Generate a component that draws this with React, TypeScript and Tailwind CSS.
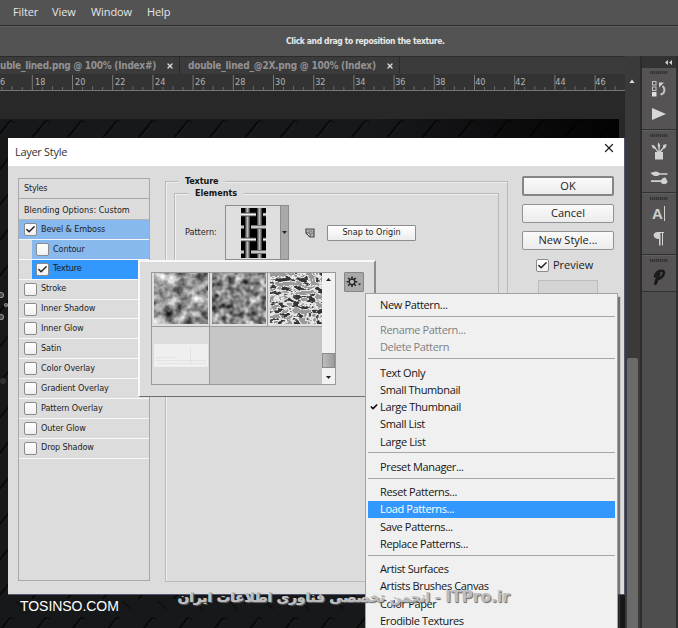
import React from "react";
import { Check, X } from "lucide-react";

interface StyleRow {
  label: string;
  checked?: boolean;
  nested?: boolean;
  tone?: "light" | "strong";
}

interface MenuEntry {
  label: string;
  disabled?: boolean;
  checked?: boolean;
  active?: boolean;
}

const STYLE_ROWS: StyleRow[] = [
  { label: "Bevel & Emboss", checked: true, tone: "light" },
  { label: "Contour", nested: true, tone: "light" },
  { label: "Texture", nested: true, checked: true, tone: "strong" },
  { label: "Stroke" },
  { label: "Inner Shadow" },
  { label: "Inner Glow" },
  { label: "Satin" },
  { label: "Color Overlay" },
  { label: "Gradient Overlay" },
  { label: "Pattern Overlay" },
  { label: "Outer Glow" },
  { label: "Drop Shadow" },
];

const MENU_GROUPS: MenuEntry[][] = [
  [{ label: "New Pattern..." }],
  [
    { label: "Rename Pattern...", disabled: true },
    { label: "Delete Pattern", disabled: true },
  ],
  [
    { label: "Text Only" },
    { label: "Small Thumbnail" },
    { label: "Large Thumbnail", checked: true },
    { label: "Small List" },
    { label: "Large List" },
  ],
  [{ label: "Preset Manager..." }],
  [
    { label: "Reset Patterns..." },
    { label: "Load Patterns...", active: true },
    { label: "Save Patterns..." },
    { label: "Replace Patterns..." },
  ],
  [
    { label: "Artist Surfaces" },
    { label: "Artists Brushes Canvas" },
    { label: "Color Paper" },
    { label: "Erodible Textures" },
  ],
];

const ROW_TONE = {
  light: "bg-[#87b9ef]",
  strong: "bg-[#3298fe]",
};

function MenuBar() {
  return (
    <div className="flex h-[26px] shrink-0 items-center border-b border-[#2f2f2f] bg-[#535353] pl-[13px] font-['Open_Sans','Noto_Sans',sans-serif] text-[11px] tracking-[-0.1px] text-[#e6e6e6]">
      <span className="w-[39px]">Filter</span>
      <span className="w-[39px]">View</span>
      <span className="w-[56px]">Window</span>
      <span>Help</span>
    </div>
  );
}

function OptionsBar() {
  return (
    <div className="flex h-[30px] shrink-0 items-center border-t border-[#5e5e5e] bg-[#535353] pl-[286px] font-['DejaVu_Sans_Condensed','DejaVu_Sans',sans-serif] text-[8.5px] font-bold tracking-[-0.38px] whitespace-nowrap text-[#e8e8e8]">
      Click and drag to reposition the texture.
    </div>
  );
}

function TabBar() {
  return (
    <div className="flex h-[18px] shrink-0 items-center border-t border-[#2b2b2b] bg-[#3b3b3c] font-['DejaVu_Sans_Condensed','DejaVu_Sans',sans-serif] text-[10px] font-bold whitespace-nowrap text-[#929292]">
      <div className="flex h-full w-[180px] items-center border-r border-[#2b2b2b]">
        <span className="w-[166px] tracking-[-0.28px]">uble_lined.png @ 100% (Index#)</span>
        <X size={8} strokeWidth={4} color="#d6d6d6" />
      </div>
      <div className="flex h-full w-[220px] items-center border-r border-[#2b2b2b] pl-2">
        <span className="w-[198px] tracking-[-0.24px]">double_lined_@2X.png @ 100% (Index)</span>
        <X size={8} strokeWidth={4} color="#d6d6d6" />
      </div>
    </div>
  );
}

function Ruler() {
  const ticks: React.ReactNode[] = [];
  for (let i = -3; i < 64; i++) {
    const x = 32.3 + i * 10.05;
    if (x < 0 || x > 623) continue;
    const major = i % 4 === 0;
    ticks.push(
      <line key={i} x1={x} x2={x} y1={major ? 1 : i % 2 === 0 ? 12 : 13} y2={16} stroke={major ? "#7a7a7a" : "#6a6a6a"} />
    );
  }
  const labels = ["6", "18", "20", "22", "24", "26", "28", "30", "32", "34", "36", "38", "40", "42", "44", "46"];
  return (
    <svg width="625" height="17" className="block shrink-0 bg-[#333334]">
      {ticks}
      <line x1="0" x2="625" y1="16.5" y2="16.5" stroke="#777" />
      {labels.map((label, i) => (
        <text
          key={label}
          x={i === 0 ? 0 : 35 + (i - 1) * 40.02}
          y="10.5"
          fill="#b5b5b5"
          className="font-['DejaVu_Sans_Condensed','DejaVu_Sans',sans-serif] text-[9px]"
        >
          {label}
        </text>
      ))}
    </svg>
  );
}

function Canvas() {
  return (
    <svg width="625" height="537" className="block bg-[#282829]">
      <defs>
        <pattern id="plate" width="35.5" height="35.5" patternUnits="userSpaceOnUse" patternTransform="translate(28 28)">
          <rect width="35.5" height="35.5" fill="#17181a" />
          <path d="M4 18C10 13 12 8 18 1.500" fill="none" stroke="#060606" strokeWidth="1.700" />
          <path d="M18 1l4 2.500M23 21c4 3 7 4 9 8" fill="none" stroke="#0b0b0b" strokeWidth="1.200" />
          <path d="M5.500 19C11.500 14 13.500 9 19 3" fill="none" stroke="#222325" strokeWidth="0.600" />
        </pattern>
        <linearGradient id="fade">
          <stop offset="0.6" stopColor="#000" stopOpacity="0" />
          <stop offset="1" stopColor="#000" stopOpacity="0.9" />
        </linearGradient>
      </defs>
      <rect y="28" width="619" height="509" fill="url(#plate)" />
      <rect y="28" width="619" height="509" fill="url(#fade)" />
      <rect x="619" y="480" width="6" height="57" fill="#171717" />
      <g fill="#45484a" stroke="#8b8f91" strokeWidth="1.200">
        <circle cx="1" cy="204" r="2.500" />
        <circle cx="6" cy="214" r="1.500" />
        <circle cx="1" cy="226" r="2.500" />
      </g>
      <circle cx="3" cy="290" r="3" fill="#303235" />
    </svg>
  );
}

function PanelGrip() {
  return <div className="mt-[3px] h-[3px] w-[18px] shrink-0 bg-[repeating-linear-gradient(90deg,#343434_0_1px,#484848_1px_2px)]" />;
}

function HistoryIcon() {
  return (
    <svg width="16" height="18" viewBox="0 0 16 18" fill="none" stroke="#c4c4c4">
      <rect x="1.5" y="1.500" width="3.500" height="3.500" />
      <rect x="1.5" y="7" width="3.500" height="3.500" />
      <rect x="1" y="12" width="4.500" height="4.500" fill="#e0e0e0" stroke="none" />
      <path d="M9.500 14.500c4.500-1 5-6 2-8.500" strokeWidth="2" />
      <path d="M8 7.500V2.500h5z" fill="#d2d2d2" stroke="none" />
    </svg>
  );
}

function PlayIcon() {
  return (
    <svg width="16" height="14" viewBox="0 0 16 14">
      <path d="M1 1l14 6-14 6z" fill="#d8d8d8" />
    </svg>
  );
}

function BrushCupIcon() {
  return (
    <svg width="16" height="18" viewBox="0 0 16 18" stroke="#d2d2d2" fill="#d2d2d2">
      <path d="M4 10h8v7.500H4z" stroke="none" />
      <path d="M7 10L3.500 5M8 10V4M9 10l4-5" strokeWidth="1.300" />
      <path d="M0.500 3c3 0 4 1 4 4-2 0-3-1-4-4zM7.500 0.500c2 2 2 4 0.500 5.500-1-1-2-3-0.500-5.500zM12 3l3.500-1c0 3-1 4-3 5z" stroke="none" />
    </svg>
  );
}

function BrushesIcon() {
  return (
    <svg width="18" height="16" viewBox="0 0 18 16" fill="#d2d2d2">
      <path d="M0 2.500C2 3.500 4 1 7 1.700c2 .5 2 1.200 3 1.500h7.500v1.600H9.500C7.500 7 3 6.500 0 2.500z" />
      <path d="M1 10.300h10c2-3 3.500-3.300 5-2.300 .5 1 0 2 1.700 3.500-1 3-5 4-7 .6H1z" />
    </svg>
  );
}

function PilcrowIcon() {
  return (
    <svg width="12" height="15" viewBox="0 0 12 15">
      <path d="M5 1h6v1H10v12.500H9V2H7.500v12.500H6V8C-1 8-1 1 5 1z" fill="#d2d2d2" />
    </svg>
  );
}

function PresetIcon() {
  return (
    <svg width="16" height="18" viewBox="0 0 16 18" fill="none" stroke="#1b1b1b" strokeLinecap="round" strokeLinejoin="round">
      <path d="M4.500 15.500L8 5.500" strokeWidth="3.200" />
      <path d="M4 8.500C5 4 8.500 2 12 3c2.500 2-1 7.500-5 7.800" strokeWidth="2.600" />
    </svg>
  );
}

function SidePanel() {
  return (
    <div className="flex w-[53px] shrink-0 bg-[#3a3a3b]">
      <div className="flex w-[14.500px] flex-col items-center">
        <svg width="13" height="302" className="block">
          <path d="M3.500 27L6 23.500 8.500 27z" fill="#ddd" />
        </svg>
        <div className="w-[11px] grow rounded-t-[2px] bg-[#6a6a6b]" />
      </div>
      <div className="flex w-9 flex-col border-l-2 border-[#2c2c2c]">
        <div className="flex h-3 items-center justify-end bg-[#333] pr-1">
          <svg width="7" height="5">
            <path d="M3 0v5L0 2.500zM7 0v5L4 2.500z" fill="#d0d0d0" />
          </svg>
        </div>
        <div className="flex h-[62px] flex-col items-center border-b border-[#313131] bg-[#555354]">
          <PanelGrip />
          <div className="mt-1.5 h-[27px]"><HistoryIcon /></div>
          <PlayIcon />
        </div>
        <div className="flex h-[63px] flex-col items-center border-t border-b border-[#313131] border-t-[#606060] bg-[#555354]">
          <PanelGrip />
          <div className="mt-[5px] h-7"><BrushCupIcon /></div>
          <BrushesIcon />
        </div>
        <div className="flex h-[62px] flex-col items-center border-t border-b border-[#313131] border-t-[#606060] bg-[#555354]">
          <PanelGrip />
          <div className="mt-[5px] flex h-[26px] items-start gap-px font-['Liberation_Sans',sans-serif] text-[15px] leading-[18px] font-bold text-[#cfcfcf]">
            A<span className="mt-px h-[15px] w-px bg-[#d0d0d0]" />
          </div>
          <PilcrowIcon />
        </div>
        <div className="flex h-[37px] flex-col items-center border-t border-b border-[#313131] border-t-[#606060] bg-[#555354]">
          <PanelGrip />
          <div className="mt-1.5"><PresetIcon /></div>
        </div>
        <div className="grow bg-[#4f4e4f]" />
      </div>
      <div className="grow border-l-2 border-[#2e2e2e] bg-[#4b4b4b]" />
    </div>
  );
}

function CheckBox({ checked }: { checked?: boolean }) {
  return (
    <span className="flex size-[13px] shrink-0 items-center justify-center rounded-[2px] border border-[#8b8b8b] bg-gradient-to-b from-white to-[#f0f0f0]">
      {checked && <Check size={11} strokeWidth={3.2} color="#222" className="shrink-0" />}
    </span>
  );
}

function StylesList() {
  return (
    <div className="flex h-[403px] w-[132px] flex-col border border-[#a9a9ab] font-['DejaVu_Sans_Condensed','DejaVu_Sans',sans-serif] text-[9px] text-[#1c1c1c]">
      <div className="flex h-5 shrink-0 items-center border-b border-[#a9a9ab] pl-[5px] tracking-[-0.2px]">Styles</div>
      <div className="flex h-[21px] shrink-0 items-center border-b border-[#b4b4b6] pt-[3px] pl-[5px]">
        Blending Options: Custom
      </div>
      {STYLE_ROWS.map((row) => (
        <div key={row.label} className="flex h-[19.9px] shrink-0 border-b border-[#f8f8f8]">
          {row.nested && <div className="w-[13px] shrink-0" />}
          <div
            className={`flex grow items-center gap-1 ${row.nested ? "pl-1" : "pl-[5px]"} ${row.tone ? ROW_TONE[row.tone] : ""}`}
          >
            <CheckBox checked={row.checked} />
            <span className="tracking-[-0.1px]">{row.label}</span>
          </div>
        </div>
      ))}
    </div>
  );
}

function WovenPattern() {
  return (
    <svg width="25" height="50" viewBox="0 0 25 50">
      <defs>
        <linearGradient id="strandV">
          <stop stopColor="#333" />
          <stop offset="0.5" stopColor="#bdbdbd" />
          <stop offset="1" stopColor="#333" />
        </linearGradient>
        <linearGradient id="strandH" x2="0" y2="1">
          <stop stopColor="#444" />
          <stop offset="0.5" stopColor="#f2f2f2" />
          <stop offset="1" stopColor="#444" />
        </linearGradient>
      </defs>
      <rect width="25" height="50" fill="#000" />
      <rect x="4" width="5" height="50" fill="url(#strandV)" />
      <rect x="16" width="5" height="50" fill="url(#strandV)" />
      <g fill="url(#strandH)">
        <rect y="4.500" width="15" height="4" />
        <rect x="22" y="4.500" width="3" height="4" />
        <rect x="10" y="17" width="15" height="4" />
        <rect y="17" width="3" height="4" />
        <rect y="29.500" width="15" height="4" />
        <rect x="22" y="29.500" width="3" height="4" />
        <rect x="10" y="42" width="15" height="4" />
        <rect y="42" width="3" height="4" />
      </g>
    </svg>
  );
}

function TextureGroup() {
  return (
    <div className="h-[406px] w-[343px] font-['DejaVu_Sans_Condensed','DejaVu_Sans',sans-serif]">
      <fieldset className="m-0 h-full border border-[#b9b9bb] px-2 shadow-[inset_1px_1px_0_#f0f0f0]">
        <legend className="ml-[4px] h-[10px] bg-[#dcdcdd] px-[7px] text-[9px] leading-[10px] font-bold tracking-[-0.1px] text-[#151515]">Texture</legend>
        <fieldset className="mt-[2px] h-[200px] border border-[#b9b9bb] px-2 shadow-[inset_1px_1px_0_#f0f0f0]">
          <legend className="ml-[5px] h-[10px] bg-[#dcdcdd] px-[7px] text-[9px] leading-[10px] font-bold text-[#151515]">Elements</legend>
          <div className="mt-[7px] flex items-center pl-[2px]">
            <span className="w-[40px] text-[9px] text-[#1c1c1c]">Pattern:</span>
            <div className="flex h-[55px] w-[64px] shrink-0 border border-[#8d8d8d]">
              <div className="flex grow items-center justify-center bg-[#dfdfe0]"><WovenPattern /></div>
              <div className="flex w-2 shrink-0 items-center justify-center border-l border-[#8d8d8d] bg-[#a9a9aa]">
                <svg width="5" height="3"><path d="M0 0h5L2.500 3z" fill="#222" /></svg>
              </div>
            </div>
            <svg width="10" height="10" className="ml-4 shrink-0">
              <path d="M1 1h8v8H5L1 5z" fill="#b9b9b9" stroke="#4a4a4a" strokeWidth="1.200" />
              <path d="M1 5h4v4z" fill="#eee" stroke="#4a4a4a" />
              <path d="M3 3h4v4" fill="none" stroke="#666" strokeWidth="0.800" />
            </svg>
            <div className="ml-[12px] flex h-4 w-[89px] shrink-0 items-center justify-center rounded-[1px] border border-[#8d8d8d] bg-gradient-to-b from-white to-[#ececec] text-[9px] text-[#1c1c1c]">
              Snap to Origin
            </div>
          </div>
        </fieldset>
      </fieldset>
    </div>
  );
}

function DialogButtons() {
  return (
    <div className="flex w-[92px] flex-col font-['Open_Sans','Noto_Sans',sans-serif] text-[11px] text-[#1b1b1b]">
      <div className="flex h-5 items-center justify-center rounded-[2px] border-2 border-[#858585] bg-gradient-to-b from-[#fafafa] to-[#ececec]">OK</div>
      <div className="mt-2 flex h-[19px] items-center justify-center rounded-[2px] border border-[#929292] bg-gradient-to-b from-[#fafafa] to-[#ececec]">Cancel</div>
      <div className="mt-2 flex h-[19px] items-center justify-center rounded-[2px] border border-[#929292] bg-gradient-to-b from-[#fafafa] to-[#ececec]">New Style...</div>
      <div className="mt-[7px] flex h-[17px] items-center gap-1 pl-[14px]">
        <CheckBox checked />
        <span>Preview</span>
      </div>
      <div className="mt-[6px] ml-4 h-[60px] w-[60px] border border-[#bcbcbe] bg-[#d4d4d5]" />
    </div>
  );
}

function LayerStyleDialog() {
  return (
    <div className="absolute top-[138px] left-[8px] h-[457px] w-[617px] border-r border-b border-[#50566c] bg-[#dcdcdd]">
      <div className="flex h-[28px] items-center justify-between bg-white pr-[8px] pl-[7px] font-['Open_Sans','Noto_Sans',sans-serif] text-[11px] tracking-[-0.3px] text-[#333]">
        Layer Style
        <X size={14} strokeWidth={2.200} color="#222" className="mb-[9px]" />
      </div>
      <div className="flex pl-[10px]">
        <div className="pt-3"><StylesList /></div>
        <div className="ml-[15px] pt-[10px]"><TextureGroup /></div>
        <div className="ml-[14px] pt-[10px]"><DialogButtons /></div>
      </div>
    </div>
  );
}

function NoiseThumb({ kind }: { kind: "clouds" | "satin" | "relief" }) {
  return (
    <svg width="54" height="51" className="block">
      <defs>
        <filter id="clouds" x="0" y="0" width="1" height="1" colorInterpolationFilters="sRGB">
          <feTurbulence type="fractalNoise" baseFrequency="0.09" numOctaves="3" seed="8" />
          <feColorMatrix values="1.3 0 0 0 -0.06 1.3 0 0 0 -0.06 1.3 0 0 0 -0.06 0 0 0 0 1" />
        </filter>
        <filter id="satin" x="0" y="0" width="1" height="1" colorInterpolationFilters="sRGB">
          <feTurbulence type="fractalNoise" baseFrequency="0.13" numOctaves="2" seed="14" />
          <feColorMatrix values="1.3 0 0 0 -0.12 1.3 0 0 0 -0.12 1.3 0 0 0 -0.12 0 0 0 0 1" />
        </filter>
        <filter id="relief" x="0" y="0" width="1" height="1" colorInterpolationFilters="sRGB">
          <feTurbulence type="fractalNoise" baseFrequency="0.13 0.22" numOctaves="3" seed="5" />
          <feColorMatrix values="3.6 0 0 0 -1.15 3.6 0 0 0 -1.15 3.6 0 0 0 -1.15 0 0 0 0 1" />
          <feComponentTransfer>
            <feFuncR type="table" tableValues="0.2 0.3 0.85 0.95 0.6" />
            <feFuncG type="table" tableValues="0.2 0.3 0.85 0.95 0.6" />
            <feFuncB type="table" tableValues="0.2 0.3 0.85 0.95 0.6" />
          </feComponentTransfer>
        </filter>
      </defs>
      {kind === "clouds" && <rect width="54" height="51" filter="url(#clouds)" />}
      {kind === "satin" && <rect width="54" height="51" filter="url(#satin)" />}
      {kind === "relief" && <rect width="54" height="51" filter="url(#relief)" />}
    </svg>
  );
}

function PatternPicker() {
  return (
    <div className="absolute top-[260px] left-[138px] flex h-[137px] w-[238px] items-start border-t-2 border-r-2 border-b border-l-2 border-t-[#f8f8f8] border-r-[#8b8b8b] border-b-[#6f6f6f] border-l-[#f8f8f8] bg-[#dcdcdd] pt-[10px] pl-[11px]">
      <div className="flex h-[113px] w-[185px] border border-[#9a9a9a] bg-[#c6c6c7]">
        <div className="flex w-[170px] flex-wrap content-start overflow-hidden">
          <div className="flex h-[54px] w-[58px] items-start border-r border-b border-[#9d9d9d] bg-[#dfdfe0] pl-[2px]"><NoiseThumb kind="clouds" /></div>
          <div className="flex h-[54px] w-[58px] items-start border-r border-b border-[#9d9d9d] bg-[#dfdfe0] pl-[2px]"><NoiseThumb kind="satin" /></div>
          <div className="flex h-[54px] w-[54px] items-start overflow-hidden border-b border-[#9d9d9d] bg-[#dfdfe0] pl-[2px]"><NoiseThumb kind="relief" /></div>
          <div className="flex h-[57px] w-[58px] items-center border-r border-[#9d9d9d] bg-[#dcdcdd] pl-[2px]">
            <svg width="54" height="23" stroke="#e2e2e2">
              <rect width="54" height="23" fill="#efefef" stroke="none" />
              <path d="M2 16.500h50M36.500 3v17" />
              <path d="M4 19.500h48M2 13.500h20" strokeDasharray="4 1" />
            </svg>
          </div>
        </div>
        <div className="flex grow flex-col items-center justify-between bg-[#f2f2f3] py-[5px]">
          <svg width="5" height="3"><path d="M0 3h5L2.500 0z" fill="#222" /></svg>
          <div className="flex flex-col items-center gap-2">
            <div className="h-[15px] w-[13px] border border-[#8a8a8a] bg-gradient-to-r from-[#bcbcbc] to-[#9d9d9d]" />
            <svg width="5" height="3"><path d="M0 0h5L2.500 3z" fill="#222" /></svg>
          </div>
        </div>
      </div>
      <div className="ml-2 flex h-5 w-5 items-center justify-center rounded-[1px] border border-[#868686] bg-[#a9a9aa]">
        <svg width="16" height="12" viewBox="0 0 16 12">
          <path
            d="M6 0.500v2M6 9v2M0.700 5.800h2M9.200 5.800h2M2.200 2l1.400 1.400M8.300 8.200l1.400 1.400M9.700 2L8.300 3.400M3.600 8.200L2.200 9.600"
            stroke="#222"
            strokeWidth="1.600"
          />
          <circle cx="6" cy="5.800" r="2.800" fill="#b5b5b5" stroke="#222" strokeWidth="1.300" />
          <path d="M12 7.500h3L13.500 9.500z" fill="#222" />
        </svg>
      </div>
    </div>
  );
}

function PatternMenu() {
  return (
    <div className="absolute top-[293px] left-[365px] h-[345px] w-[253px] border border-[#a2a2a3] bg-[#f0f0f0] pt-[2.500px] font-['Open_Sans','Noto_Sans',sans-serif] text-[11px] tracking-[-0.36px] text-[#161616] shadow-[2px_4px_1px_rgba(60,60,65,0.65)]">
      {MENU_GROUPS.map((group, idx) => (
        <React.Fragment key={group[0].label}>
          {idx > 0 && (
            <div className="h-[8.2px] px-[2px] pt-[2px]">
              <div className="h-px bg-[#a7a7a7]" />
            </div>
          )}
          {group.map((entry) => (
            <div
              key={entry.label}
              className={`mx-[2px] flex h-[17.2px] items-center ${entry.active ? "bg-[#3298fd] text-white" : ""} ${entry.disabled ? "text-[#7f7f80]" : ""}`}
            >
              <span className="flex w-3 shrink-0 pl-[2px]">
                {entry.checked && <Check size={8} strokeWidth={5} color="#111" />}
              </span>
              {entry.label}
            </div>
          ))}
        </React.Fragment>
      ))}
    </div>
  );
}

export default function App() {
  return (
    <div className="relative flex h-[628px] w-[678px] flex-col overflow-hidden bg-[#282829]">
      <MenuBar />
      <OptionsBar />
      <div className="flex min-h-0 grow">
        <div className="flex w-[625px] shrink-0 flex-col">
          <TabBar />
          <Ruler />
          <Canvas />
        </div>
        <SidePanel />
      </div>

      <LayerStyleDialog />
      <PatternPicker />
      <PatternMenu />

      {/* Watermarks */}
      <div className="absolute top-[598px] left-[20px] font-['Liberation_Sans',sans-serif] text-[14px] leading-4 tracking-[-0.05px] text-white">
        TOSINSO.COM
      </div>
      <div
        dir="rtl"
        className="absolute top-[586px] right-[168px] font-['DejaVu_Sans',sans-serif] text-[13.5px] leading-[22px] font-bold whitespace-nowrap text-[#bdbdbf] [text-shadow:1px_1px_1px_#666,-0.5px_-0.5px_0_#e4e4e4]"
      >
        <span className="text-[15.5px]">ITPro.ir</span> - انجمن تخصصی فناوری اطلاعات ایران
      </div>
    </div>
  );
}
